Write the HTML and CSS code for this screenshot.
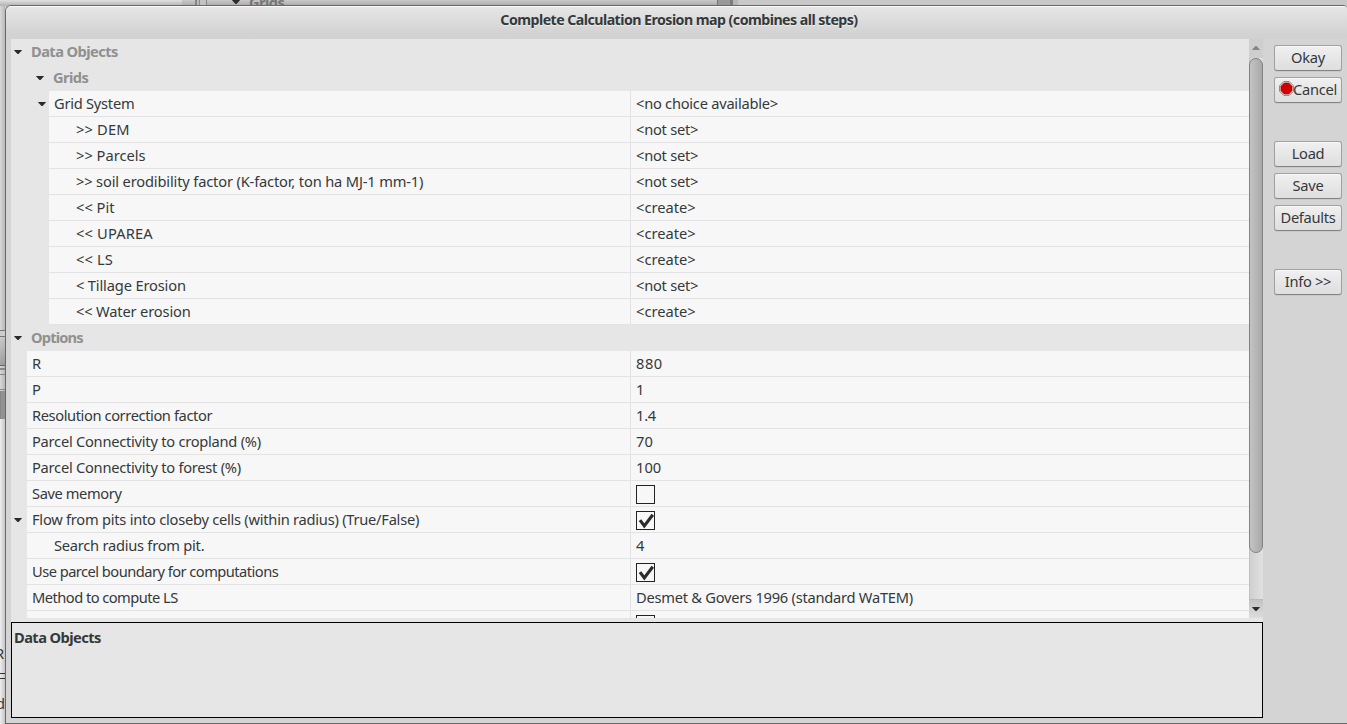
FILE: index.html
```html
<!DOCTYPE html>
<html lang="en">
<head>
<meta charset="utf-8">
<title>Complete Calculation Erosion map</title>
<link rel="stylesheet" href="styles.css">
</head>
<body>
<div class="behind">
  <div class="behind-top"><span class="seg seg-a"></span><span class="seg seg-b"></span><span class="seg seg-c"></span><i class="arrow behind-arrow"></i><b class="behind-grids">Grids</b></div>
  <div class="behind-left">
    <span class="frag frag-line"></span><span class="frag frag-button"></span><span class="frag frag-tab"></span><span class="frag frag-thumb"></span><span class="frag frag-page"></span>
    <span class="letter letter-r">R</span><span class="frag frag-rule"></span><span class="letter letter-d">d</span>
  </div>
</div>
<main class="dialog">
  <header class="titlebar"><span class="title">Complete Calculation Erosion map (combines all steps)</span></header>
  <div class="body">
    <section class="panel">
      <div class="viewport">
        <div class="grid">
          <div class="row category"><span class="gutter"><i class="arrow"></i></span><b>Data Objects</b></div>
          <div class="row category sub"><span class="gutter"><i class="arrow"></i></span><b>Grids</b></div>
          <div class="row deep"><span class="gutter"><i class="arrow"></i></span><span class="name">Grid System</span><span class="value">&lt;no choice available&gt;</span></div>
          <div class="row deep child"><span class="gutter"></span><span class="name open">&gt;&gt; DEM</span><span class="value">&lt;not set&gt;</span></div>
          <div class="row deep child"><span class="gutter"></span><span class="name normal">&gt;&gt; Parcels</span><span class="value">&lt;not set&gt;</span></div>
          <div class="row deep child"><span class="gutter"></span><span class="name close">&gt;&gt; soil erodibility factor (K-factor, ton ha MJ-1 mm-1)</span><span class="value">&lt;not set&gt;</span></div>
          <div class="row deep child"><span class="gutter"></span><span class="name normal">&lt;&lt; Pit</span><span class="value normal">&lt;create&gt;</span></div>
          <div class="row deep child"><span class="gutter"></span><span class="name open">&lt;&lt; UPAREA</span><span class="value normal">&lt;create&gt;</span></div>
          <div class="row deep child"><span class="gutter"></span><span class="name open">&lt;&lt; LS</span><span class="value normal">&lt;create&gt;</span></div>
          <div class="row deep child"><span class="gutter"></span><span class="name close">&lt; Tillage Erosion</span><span class="value">&lt;not set&gt;</span></div>
          <div class="row deep child"><span class="gutter"></span><span class="name close">&lt;&lt; Water erosion</span><span class="value normal">&lt;create&gt;</span></div>
          <div class="row category options"><span class="gutter"><i class="arrow"></i></span><b>Options</b></div>
          <div class="row"><span class="gutter"></span><span class="name">R</span><span class="value wide">880</span></div>
          <div class="row"><span class="gutter"></span><span class="name">P</span><span class="value">1</span></div>
          <div class="row"><span class="gutter"></span><span class="name tight">Resolution correction factor</span><span class="value">1.4</span></div>
          <div class="row"><span class="gutter"></span><span class="name">Parcel Connectivity to cropland (%)</span><span class="value normal">70</span></div>
          <div class="row"><span class="gutter"></span><span class="name">Parcel Connectivity to forest (%)</span><span class="value normal">100</span></div>
          <div class="row"><span class="gutter"></span><span class="name tight">Save memory</span><span class="value"><span class="check"></span></span></div>
          <div class="row"><span class="gutter"><i class="arrow"></i></span><span class="name">Flow from pits into closeby cells (within radius) (True/False)</span><span class="value"><span class="check"><svg viewBox="0 0 17 17"><path d="M3 8.2 7.3 14 15.8 2.8"/></svg></span></span></div>
          <div class="row child"><span class="gutter"></span><span class="name">Search radius from pit.</span><span class="value">4</span></div>
          <div class="row"><span class="gutter"></span><span class="name tighter">Use parcel boundary for computations</span><span class="value"><span class="check"><svg viewBox="0 0 17 17"><path d="M3 8.2 7.3 14 15.8 2.8"/></svg></span></span></div>
          <div class="row"><span class="gutter"></span><span class="name tighter">Method to compute LS</span><span class="value">Desmet &amp; Govers 1996 (standard WaTEM)</span></div>
          <div class="row"><span class="gutter"></span><span class="name"></span><span class="value"><span class="check"></span></span></div>
        </div>
        <div class="scrollbar">
          <span class="step"><i class="arrow up"></i></span>
          <span class="track"><span class="thumb"></span></span>
          <span class="step down"><i class="arrow"></i></span>
        </div>
      </div>
      <div class="description"><b>Data Objects</b></div>
    </section>
    <aside class="actions">
      <button class="btn">Okay</button>
      <button class="btn"><svg class="stop" viewBox="0 0 15 15"><path class="stop-rim" d="M4.7.7h5.6l4 4v5.6l-4 4H4.7l-4-4V4.7z"/><path class="stop-face" d="M5.2 2h4.6L13 5.2v4.6L9.8 13H5.2L2 9.8V5.2z"/></svg>Cancel</button>
      <button class="btn group">Load</button>
      <button class="btn">Save</button>
      <button class="btn">Defaults</button>
      <button class="btn group">Info &gt;&gt;</button>
    </aside>
  </div>
</main>
</body>
</html>
```
FILE: styles.css
```css
* { box-sizing: border-box; }
body {
  margin: 0;
  width: 1347px;
  height: 724px;
  overflow: hidden;
  position: relative;
  background: #d4d4d4;
  font: 14.67px/26px "Noto Sans", sans-serif;
  letter-spacing: -.25px;
  color: #34393b;
}
b { letter-spacing: -.58px; }
.arrow {
  display: block;
  width: 8px;
  height: 4px;
  background: #2b2b2b;
  clip-path: polygon(0 0, 100% 0, 94% 20%, 56% 100%, 44% 100%, 6% 20%);
}

/* Slivers of the window underneath */
.behind-top {
  position: absolute;
  inset: 0 0 auto 0;
  height: 6px;
  overflow: hidden;
  background: linear-gradient(#c8c8c8, #a9a9a9);
}
.seg { position: absolute; top: 0; height: 6px; }
.seg-a { left: 0; width: 182px; background: linear-gradient(#e0e0e0, #b2b2b2); }
.seg-b { left: 195px; width: 12px; border: solid #858585; border-width: 0 1px 0 2px; background: linear-gradient(90deg, #bbb 2px, #888 2px 3px, #c2c2c2 3px); }
.seg-c { left: 717px; width: 630px; border-left: 1px solid #777; background: linear-gradient(90deg, #999 12px, #7d7d7d 12px 15px, #b7b7b7 15px 20px, #c8c8c8 20px); }
.behind-arrow { position: absolute; left: 232px; top: 0; }
.behind-grids { position: absolute; left: 249px; top: -11px; line-height: 26px; color: #777; }
.behind-left {
  position: absolute;
  inset: 6px auto 0 0;
  width: 5px;
  overflow: hidden;
  background: linear-gradient(90deg, #d9d9d9, #b8b8b8);
}
.frag { position: absolute; left: 0; width: 5px; }
.frag-line { top: 324px; height: 7px; border: solid #777; border-width: 1px 0; background: #ccc; }
.frag-button { top: 331px; height: 29px; background: linear-gradient(135deg, #ccc, #999); border-bottom: 1px solid #666; }
.frag-tab { top: 362px; height: 22px; border: solid #888; border-width: 2px 0 1px; background: linear-gradient(transparent 4px, #888 4px 5px, transparent 5px); }
.frag-thumb { top: 385px; height: 28px; border-left: 1px solid #888; background: #929292; }
.frag-page { top: 413px; height: 305px; background: linear-gradient(90deg, #eee, #c5c5c5); }
.frag-rule { top: 667px; height: 6px; border: solid #2e3436; border-width: 1px 0; }
.letter { position: absolute; left: -5px; }
.letter-r { top: 634px; }
.letter-d { top: 684px; left: -4px; }

.dialog {
  position: absolute;
  inset: 5px 0 0 5px;
  display: flex;
  flex-direction: column;
  background: #d4d4d4;
  border: solid #686868;
  border-width: 1px 0 1px 1px;
  border-radius: 6px 4px 0 0;
  overflow: hidden;
}
.titlebar {
  flex: 0 0 33px;
  border-top: 1px solid #fafafa;
  background: linear-gradient(#e6e6e6, #d2d2d2 85%);
  text-align: center;
  font-size: 14.2px;
  font-weight: bold;
  letter-spacing: -.54px;
  text-shadow: 0 1px 0 #eee;
}
.title { padding-left: 5px; }
.body { flex: 1; display: flex; padding-left: 5px; }
.panel {
  width: 1252px;
  height: 679px;
  display: flex;
  flex-direction: column;
  gap: 4px;
  background: #e6e6e6;
}
.viewport { display: flex; height: 579px; overflow: hidden; }
.grid { width: 1238px; }
.row {
  display: grid;
  grid-template-columns: 16px 603px 1fr;
  height: 26px;
  line-height: 25px;
  background: #f7f7f7;
  white-space: nowrap;
}
.row.deep { grid-template-columns: 38px 581px 1fr; }
.gutter { background: #e6e6e6; padding: 11px 0 0 3px; }
.deep .gutter { padding-left: 27px; }
.name, .value { border-bottom: 1px solid #e3e3e3; padding-left: 5px; }
.child .name { padding-left: 27px; }
.name + .value { border-left: 1px solid #e3e3e3; }

/* Tracking of individual cells */
.tighter { letter-spacing: -.53px; }
.tight { letter-spacing: -.4px; }
.close { letter-spacing: -.16px; }
.normal { letter-spacing: 0; }
.open { letter-spacing: .15px; }
.wide { letter-spacing: .5px; }

.row.category { grid-template-columns: 20px 1fr; background: #e6e6e6; color: #909090; }
.row.category.sub { grid-template-columns: 42px 1fr; }
.options b { letter-spacing: -.85px; }
.sub .gutter { padding-left: 25px; }
.check {
  display: block;
  width: 19px;
  height: 19px;
  margin-top: 4px;
  border: 1px solid #222;
}
.check svg { display: block; width: 17px; height: 17px; }
.check path { fill: none; stroke: #2b2b2b; stroke-width: 3.1; }

.scrollbar { width: 14px; display: flex; flex-direction: column; background: #cfcfcf; }
.step { height: 19px; padding: 7px 0 0 3px; background: #cecece; }
.step.down { padding-top: 7px; border-top: 1px solid #bbb; background: linear-gradient(#c3c3c3, #ddd); }
.up { transform: rotate(180deg); background: #858585; }
.track { flex: 1; border-left: 1px solid #c2c2c2; background: linear-gradient(90deg, #d0d0d0, #e1e1e1); }
.thumb {
  display: block;
  width: 14px;
  height: 495px;
  margin-left: -1px;
  border: 1px solid #828282;
  border-radius: 7px;
  background: linear-gradient(90deg, #c4c4c4, #a8a8a8);
}
.description { flex: 1; border: 1px solid #000; padding: 1px 2px 0; }

.actions { display: flex; flex-direction: column; gap: 6px; padding: 6px 0 0 11px; }
.btn {
  display: flex;
  align-items: center;
  justify-content: center;
  width: 68px;
  height: 26px;
  padding: 0 0 2px;
  border: 1px solid #a0a0a0;
  border-bottom-color: #858585;
  border-radius: 3px;
  background: linear-gradient(#f0f0f0, #dedede);
  box-shadow: inset 0 1px #f8f8f8, 0 1px #c8c8c8;
  font: inherit;
  letter-spacing: -.3px;
  color: inherit;
  white-space: nowrap;
}
.btn.group { margin-top: 32px; }
.stop { width: 15px; height: 15px; flex: none; margin: -1px -1px 0 0; }
.stop-rim { fill: #eee; stroke: #777; }
.stop-face { fill: #d40000; stroke: #a00000; stroke-width: .6; }
```
